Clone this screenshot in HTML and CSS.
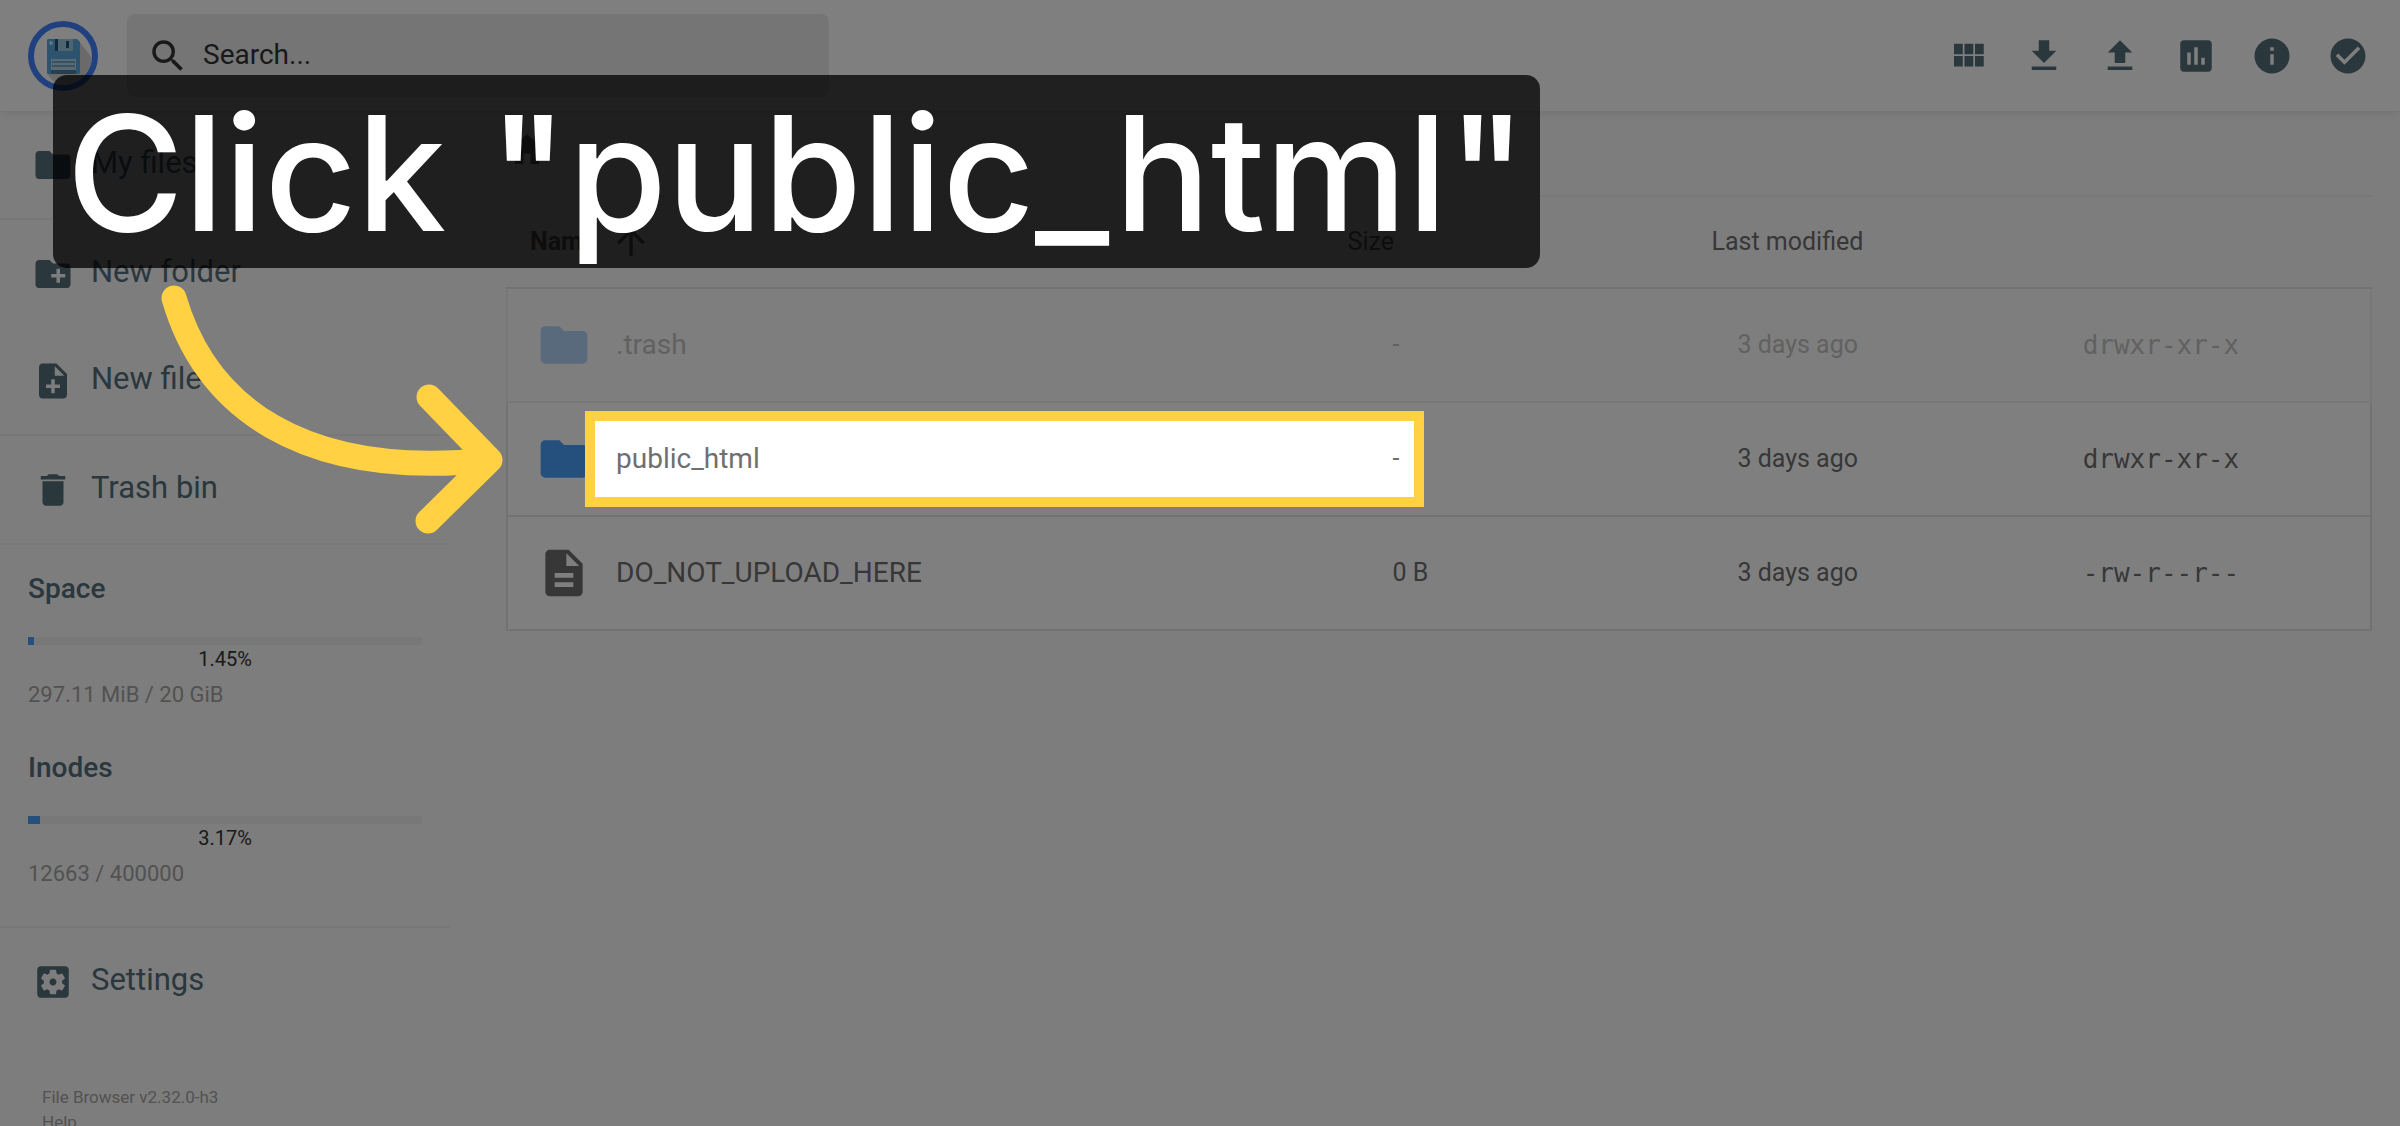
FILE: index.html
```html
<!DOCTYPE html>
<html lang="en">
<head>
<meta charset="utf-8">
<title>File Browser</title>
<link rel="stylesheet" href="styles.css">
</head>
<body>
<svg class="sprite" aria-hidden="true">
  <symbol id="i-folder" viewBox="0 0 24 24"><path d="M10 4H4c-1.100 0-2 .9-2 2v12c0 1.100.9 2 2 2h16c1.100 0 2-.9 2-2V8c0-1.100-.9-2-2-2h-8l-2-2z"/></symbol>
</svg>
<div class="app">
  <header class="topbar">
    <svg class="logo" viewBox="0 0 70 70" role="img" aria-label="File Browser">
      <circle cx="35" cy="35" r="32" fill="#fff" stroke="#4080ff" stroke-width="6"/>
      <path d="M50 19l14 18a29 29 0 0 1-36 26l-9-10z" fill="#d4d4d4"/>
      <path d="M20 18h29l3 3v31l-1 1H20l-1-1V19z" fill="#5aa9dd"/>
      <path d="M27 18h18v12H27z" fill="#9cc8de"/>
      <path d="M27 18h3v12h-3zM38 20h3v7h-3z" fill="#1f5478"/>
      <circle cx="23" cy="22" r="2" fill="#cfe6f3"/>
      <path d="M23 38h25v15H23z" fill="#b4d4e4"/>
      <path d="M24 41h23M24 45h23" stroke="#5d94b8" stroke-width="1.500"/>
      <path d="M23 49h25v4H23z" fill="#4a7f9f"/>
    </svg>
    <label class="search">
      <svg class="icon" viewBox="0 0 24 24"><path d="M15.500 14h-.79l-.28-.27A6.471 6.471 0 0 0 16 9.500 6.500 6.500 0 1 0 9.500 16c1.610 0 3.090-.59 4.230-1.570l.27.28v.79l5 4.990L20.490 19l-4.990-5zm-6 0C7.010 14 5 11.990 5 9.500S7.010 5 9.500 5 14 7.010 14 9.500 11.990 14 9.500 14z"/></svg>
      <input type="text" placeholder="Search..." aria-label="Search">
    </label>
    <div class="tools">
      <button aria-label="Switch view"><svg class="icon" viewBox="0 0 24 24"><path d="M4 11h5V5H4v6zm0 7h5v-6H4v6zm6 0h5v-6h-5v6zm6 0h5v-6h-5v6zm-6-7h5V5h-5v6zm6-6v6h5V5h-5z"/></svg></button>
      <button aria-label="Download"><svg class="icon" viewBox="0 0 24 24"><path d="M19 9h-4V3H9v6H5l7 7 7-7zM5 18v2h14v-2H5z"/></svg></button>
      <button aria-label="Upload"><svg class="icon" viewBox="0 0 24 24"><path d="M9 16h6v-6h4l-7-7-7 7h4zm-4 2h14v2H5z"/></svg></button>
      <button aria-label="Usage"><svg class="icon" viewBox="0 0 24 24"><path d="M19 3H5c-1.100 0-2 .9-2 2v14c0 1.100.9 2 2 2h14c1.100 0 2-.9 2-2V5c0-1.100-.9-2-2-2zM9 17H7v-7h2v7zm4 0h-2V7h2v10zm4 0h-2v-4h2v4z"/></svg></button>
      <button aria-label="Info"><svg class="icon" viewBox="0 0 24 24"><path d="M12 2C6.480 2 2 6.480 2 12s4.480 10 10 10 10-4.480 10-10S17.520 2 12 2zm1 15h-2v-6h2v6zm0-8h-2V7h2v2z"/></svg></button>
      <button aria-label="Select multiple"><svg class="icon" viewBox="0 0 24 24"><path d="M12 2C6.480 2 2 6.480 2 12s4.480 10 10 10 10-4.480 10-10S17.520 2 12 2zm-2 15l-5-5 1.410-1.410L10 14.170l7.590-7.590L19 8l-9 9z"/></svg></button>
    </div>
  </header>
  <div class="body">
    <nav class="sidebar">
      <div class="group">
        <button class="item"><svg class="icon"><use href="#i-folder"/></svg><span>My files</span></button>
      </div>
      <div class="group">
        <button class="item"><svg class="icon" viewBox="0 0 24 24"><path d="M20 6h-8l-2-2H4c-1.110 0-1.990.89-1.990 2L2 18c0 1.110.89 2 2 2h16c1.110 0 2-.89 2-2V8c0-1.110-.89-2-2-2zm-1 8h-3v3h-2v-3h-3v-2h3V9h2v3h3v2z"/></svg><span>New folder</span></button>
        <button class="item"><svg class="icon" viewBox="0 0 24 24"><path d="M14 2H6c-1.100 0-1.990.9-1.990 2L4 20c0 1.100.89 2 1.990 2H18c1.100 0 2-.9 2-2V8l-6-6zm2 14h-3v3h-2v-3H8v-2h3v-3h2v3h3v2zm-3-7V3.500L18.500 9H13z"/></svg><span>New file</span></button>
      </div>
      <div class="group">
        <button class="item"><svg class="icon" viewBox="0 0 24 24"><path d="M6 19c0 1.100.9 2 2 2h8c1.100 0 2-.9 2-2V7H6v12zM19 4h-3.500l-1-1h-5l-1 1H5v2h14V4z"/></svg><span>Trash bin</span></button>
      </div>
      <div class="group usage">
        <section class="quota">
          <h2>Space</h2>
          <div class="bar"><div class="fill" style="width:1.45%"></div></div>
          <p class="percent">1.45%</p>
          <p class="amount">297.11 MiB / 20 GiB</p>
        </section>
        <section class="quota">
          <h2>Inodes</h2>
          <div class="bar"><div class="fill" style="width:3.17%"></div></div>
          <p class="percent">3.17%</p>
          <p class="amount">12663 / 400000</p>
        </section>
      </div>
      <div class="group">
        <button class="item"><svg class="icon" viewBox="0 0 24 24"><path d="M12 10c-1.100 0-2 .9-2 2s.9 2 2 2 2-.9 2-2-.9-2-2-2zm7-7H5c-1.110 0-2 .9-2 2v14c0 1.100.89 2 2 2h14c1.110 0 2-.9 2-2V5c0-1.100-.89-2-2-2zm-1.750 9c0 .23-.02.46-.05.68l1.480 1.160c.13.11.17.3.08.45l-1.400 2.420c-.09.15-.27.21-.43.15l-1.740-.7c-.36.28-.76.51-1.180.69l-.26 1.850c-.03.17-.18.3-.35.3h-2.800c-.17 0-.32-.13-.35-.29l-.26-1.850c-.43-.18-.82-.41-1.180-.69l-1.740.7c-.16.06-.34 0-.43-.15l-1.400-2.420c-.09-.15-.05-.34.08-.45l1.480-1.160c-.03-.23-.05-.46-.05-.69 0-.23.02-.46.05-.68l-1.480-1.160c-.13-.11-.17-.3-.08-.45l1.400-2.420c.09-.15.27-.21.43-.15l1.740.7c.36-.28.76-.51 1.180-.69l.26-1.850c.03-.17.18-.3.35-.3h2.800c.17 0 .32.13.35.29l.26 1.850c.43.18.82.41 1.180.69l1.740-.7c.16-.06.34 0 .43.15l1.400 2.420c.09.15.05.34-.08.45l-1.480 1.160c.03.23.05.46.05.69z"/></svg><span>Settings</span></button>
      </div>
      <footer class="credits">
        <a href="#version">File Browser v2.32.0-h3</a>
        <a href="#help">Help</a>
      </footer>
    </nav>
    <main class="content">
      <div class="crumbs"><a href="#home" aria-label="Home"><svg class="icon" viewBox="0 0 24 24"><path d="M10 20v-6h4v6h5v-8h3L12 3 2 12h3v8z"/></svg></a></div>
      <table class="files">
        <colgroup><col class="c-name"><col class="c-size"><col class="c-date"><col></colgroup>
        <thead>
          <tr>
            <th class="sorted"><span>Name <svg class="icon" viewBox="0 0 24 24"><path d="M4 12l1.410 1.410L11 7.830V20h2V7.830l5.580 5.590L20 12l-8-8-8 8z"/></svg></span></th>
            <th>Size</th><th>Last modified</th><th></th>
          </tr>
        </thead>
        <tbody>
          <tr class="hidden-file"><td class="name"><span><svg class="icon folder"><use href="#i-folder"/></svg>.trash</span></td><td class="size">-</td><td>3 days ago</td><td class="mode">drwxr-xr-x</td></tr>
          <tr><td class="name"><span><svg class="icon folder"><use href="#i-folder"/></svg>public_html</span></td><td class="size">-</td><td>3 days ago</td><td class="mode">drwxr-xr-x</td></tr>
          <tr><td class="name"><span><svg class="icon" viewBox="0 0 24 24"><path d="M14 2H6c-1.100 0-1.990.9-1.990 2L4 20c0 1.100.89 2 1.990 2H18c1.100 0 2-.9 2-2V8l-6-6zm2 16H8v-2h8v2zm0-4H8v-2h8v2zm-3-5V3.500L18.500 9H13z"/></svg>DO_NOT_UPLOAD_HERE</span></td><td class="size">0 B</td><td>3 days ago</td><td class="mode">-rw-r--r--</td></tr>
        </tbody>
      </table>
    </main>
  </div>
  <div class="spotlight"></div>
  <div class="callout">Click "public_html"</div>
  <svg class="arrow" viewBox="0 0 350 260" aria-hidden="true"><path d="M14 14C45 121 140 196 330 176M269 113L330 176L268 237"/></svg>
</div>
</body>
</html>
```

FILE: styles.css
```css
* { box-sizing: border-box; }
body {
  margin: 0;
  background: #fafafa;
  color: #6f6f6f;
  font: 28px/32px Roboto, "Liberation Sans", sans-serif;
}
button { border: 0; padding: 0; background: none; font: inherit; color: inherit; }
a { color: inherit; text-decoration: none; }
h2, p { margin: 0; }
.sprite { display: none; }
.icon { width: 42px; height: 42px; flex: none; fill: currentColor; }

.app { position: relative; height: 100vh; overflow: hidden; display: flex; flex-direction: column; }

.topbar {
  flex: none;
  height: 111px;
  padding: 0 28px;
  display: flex;
  align-items: center;
  background: #fff;
  box-shadow: 0 0 9px rgba(0, 0, 0, .12);
  color: #546e7a;
}
.logo { width: 70px; height: 70px; margin-right: 29px; }
.search {
  width: 702px;
  height: 83px;
  padding: 0 20px;
  display: flex;
  align-items: center;
  gap: 14px;
  border-radius: 8px;
  background: #ebebeb;
  color: #333;
}
.search input { flex: 1; min-width: 0; border: 0; padding: 0 0 2px; background: none; font: inherit; outline: 0; }
.search input::placeholder { color: #333; opacity: 1; }
.tools { margin-left: auto; display: flex; gap: 34px; padding-right: 3px; }
.tools button { display: flex; }

.body { flex: 1; min-height: 0; display: flex; }
.sidebar { flex: none; width: 450px; }
.group { border-bottom: 2px solid #f0f0f0; color: #546e7a; }
.group:nth-of-type(5) { border: 0; }
.item {
  width: 100%;
  height: 107px;
  padding-left: 32px;
  display: flex;
  align-items: center;
  gap: 17px;
  font-size: 31px;
}
.item span { padding-bottom: 3px; }
.usage { padding: 28px 28px 38px; display: grid; gap: 43px; }
.quota h2 { font-size: 28px; line-height: 32px; font-weight: 500; }
.bar { height: 8px; margin-top: 32px; background: #f0f0f0; }
.fill { height: 100%; background: #4a9ef8; }
.percent { color: #333; font-size: 20px; line-height: 28px; text-align: center; }
.amount { margin-top: 8px; color: #a5a5a5; font-size: 22px; line-height: 28px; }
.credits { padding: 50px 42px; display: grid; color: #a5a5a5; font-size: 17px; line-height: 25px; }

.content { flex: 1; min-width: 0; padding: 0 28px 0 56px; }
.crumbs { height: 86px; display: flex; align-items: center; border-bottom: 2px solid #f0f0f0; }
.files { width: 100%; table-layout: fixed; border-spacing: 0; font-size: 25px; }
.c-name { width: 45.1%; }
.c-size { width: 19.5%; }
.c-date { width: 18.5%; }
th { height: 92px; padding: 0; text-align: left; font-weight: 400; border-bottom: 2px solid #e4e4e4; }
th.sorted { padding-left: 24px; font-weight: 700; }
th span, .name span { display: flex; align-items: center; }
th .icon { margin-left: 14px; }
td { height: 114px; padding: 0 0 0 26px; background: #fff; border-bottom: 2px solid #e4e4e4; }
td:first-child { border-left: 2px solid #e4e4e4; }
td:last-child { border-right: 2px solid #e4e4e4; }
.name { padding-left: 28px; font-size: 28px; }
.name .icon { width: 56px; height: 56px; margin-right: 24px; }
.size { padding-left: 45px; }
.folder { color: #4a9ef8; }
.mode { font-family: "DejaVu Sans Mono", monospace; font-size: 26px; }
.hidden-file { opacity: .4; }

.spotlight {
  position: absolute;
  left: 585px;
  top: 411px;
  width: 839px;
  height: 96px;
  border: 10px solid #ffd143;
  box-shadow: 0 0 0 3000px rgba(0, 0, 0, .5);
}
.callout {
  position: absolute;
  left: 53px;
  top: 75px;
  width: 1487px;
  height: 193px;
  border-radius: 14px;
  background: rgba(0, 0, 0, .75);
  color: #fff;
  font: 500 160px/196px Inter, "Liberation Sans", sans-serif;
  text-align: center;
  white-space: nowrap;
}
.arrow {
  position: absolute;
  left: 160px;
  top: 284px;
  width: 350px;
  height: 260px;
  fill: none;
  stroke: #ffd143;
  stroke-width: 25;
  stroke-linecap: round;
  stroke-linejoin: round;
}
```
